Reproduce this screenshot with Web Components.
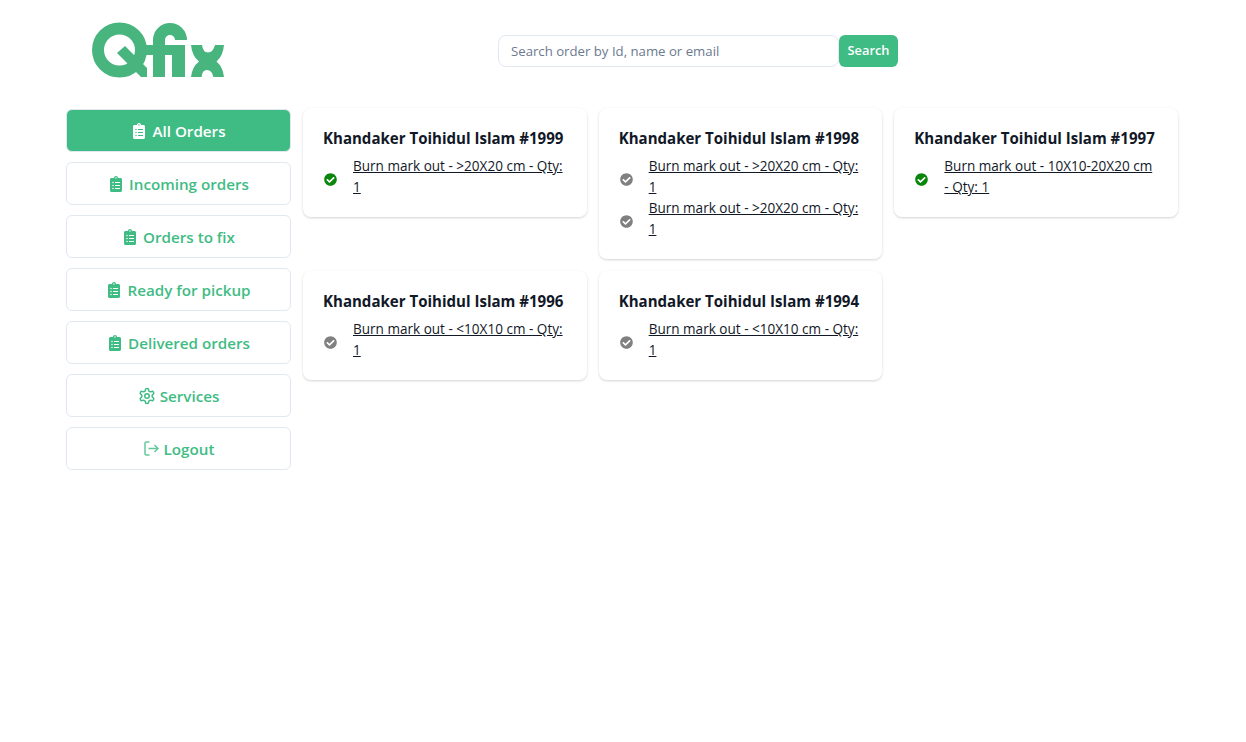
<!DOCTYPE html>
<html><head><meta charset="utf-8">
<style>
html,body{margin:0;padding:0;background:#fff;font-family:"Open Sans","Noto Sans","Liberation Sans",sans-serif;color:#111827}
</style></head><body>
<template id="clip"><svg width="12" height="16" viewBox="0 0 384 512" fill="currentColor" style="display:block"><path d="M336 64h-80c0-35.300-28.700-64-64-64s-64 28.700-64 64H48C21.500 64 0 85.500 0 112v352c0 26.500 21.500 48 48 48h288c26.500 0 48-21.500 48-48V112c0-26.500-21.500-48-48-48zM96 424c-13.300 0-24-10.700-24-24s10.700-24 24-24 24 10.700 24 24-10.700 24-24 24zm0-96c-13.300 0-24-10.700-24-24s10.700-24 24-24 24 10.700 24 24-10.700 24-24 24zm0-96c-13.300 0-24-10.700-24-24s10.700-24 24-24 24 10.700 24 24-10.700 24-24 24zm96-192c13.300 0 24 10.700 24 24s-10.700 24-24 24-24-10.700-24-24 10.700-24 24-24zm128 368c0 4.400-3.600 8-8 8H168c-4.400 0-8-3.600-8-8v-16c0-4.400 3.600-8 8-8h144c4.400 0 8 3.600 8 8v16zm0-96c0 4.400-3.600 8-8 8H168c-4.400 0-8-3.600-8-8v-16c0-4.400 3.600-8 8-8h144c4.400 0 8 3.600 8 8v16zm0-96c0 4.400-3.600 8-8 8H168c-4.400 0-8-3.600-8-8v-16c0-4.400 3.600-8 8-8h144c4.400 0 8 3.600 8 8v16z"/></svg></template>
<q-app></q-app>
<script>
const GREEN='#3fbc84';
const icons={
clip:()=>document.getElementById('clip').innerHTML,
gear:()=>`<svg width="18" height="18" viewBox="0 0 24 24" fill="none" stroke="currentColor" stroke-width="2" stroke-linecap="round" stroke-linejoin="round" style="display:block;margin-right:-3px;margin-left:-2px"><path d="M12.220 2h-.44a2 2 0 0 0-2 2v.18a2 2 0 0 1-1 1.730l-.43.250a2 2 0 0 1-2 0l-.150-.080a2 2 0 0 0-2.730.730l-.220.380a2 2 0 0 0 .730 2.730l.150.100a2 2 0 0 1 1 1.720v.510a2 2 0 0 1-1 1.740l-.150.090a2 2 0 0 0-.730 2.730l.220.380a2 2 0 0 0 2.730.730l.150-.080a2 2 0 0 1 2 0l.430.250a2 2 0 0 1 1 1.730V20a2 2 0 0 0 2 2h.44a2 2 0 0 0 2-2v-.18a2 2 0 0 1 1-1.730l.430-.250a2 2 0 0 1 2 0l.150.080a2 2 0 0 0 2.730-.730l.220-.390a2 2 0 0 0-.730-2.730l-.150-.080a2 2 0 0 1-1-1.740v-.500a2 2 0 0 1 1-1.740l.150-.090a2 2 0 0 0 .730-2.730l-.220-.380a2 2 0 0 0-2.730-.730l-.150.080a2 2 0 0 1-2 0l-.430-.250a2 2 0 0 1-1-1.730V4a2 2 0 0 0-2-2z"/><circle cx="12" cy="12" r="3"/></svg>`,
out:()=>`<svg width="15" height="15" viewBox="0 0 15 15" fill="none" stroke="currentColor" stroke-width="1.500" style="display:block;opacity:.8;margin-right:-2px;margin-left:-1px"><path d="M5.500 1H2.200Q1 1 1 2.200v10.600Q1 14 2.200 14H5.500"/><path d="M4.500 7.500h9.500M10.500 4 14 7.500 10.500 11"/></svg>`
};
const LOGO='#48b57f';
class QLogo extends HTMLElement{constructor(){super();this.attachShadow({mode:'open'}).innerHTML=`<style>:host{display:block;width:134px;height:56px}svg{display:block}</style>
<svg width="134" height="56" viewBox="0 0 134 56" fill="none" stroke="${LOGO}" aria-label="Qfix logo">
<circle cx="27.500" cy="28" r="21.500" stroke-width="12"/>
<path fill="${LOGO}" stroke="none" d="M33 24 55 46V55H49L25 31Z"/>
<path d="M53 28H80" stroke-width="10"/>
<path d="M67 55V18a11 11 0 0 1 22 0" stroke-width="12"/>
<path fill="${LOGO}" stroke="none" d="M80 23H93V55H80Z"/>
<path fill="${LOGO}" stroke="none" d="M99 23H110Q111 30.500 116 30.500T123 23H132Q131 34 124.500 39.500 131 45 132 55H121.300Q120 48 115 48T109.700 55H99Q100 45 107 39.500 100 34 99 23Z"/>
</svg>`}}
customElements.define('q-logo',QLogo);

class QSearch extends HTMLElement{constructor(){super();this.attachShadow({mode:'open'}).innerHTML=`<style>
:host{display:flex;width:400px;align-items:center;font-family:inherit}
.i{flex:1;height:32px;box-sizing:border-box;border:1px solid #e2e8f0;border-radius:8px;display:flex;align-items:center;padding-left:12px;font-size:13.2px;color:#6b7a90;background:#fff;padding-bottom:1px}
.b{height:32px;width:59px;box-sizing:border-box;background:${GREEN};color:#fff;border-radius:6px;font-weight:600;font-size:12.8px;display:flex;align-items:center;justify-content:center;padding-bottom:2px}
</style><div class="i"><slot></slot></div><div class="b">Search</div>`}}
customElements.define('q-search',QSearch);

class QNav extends HTMLElement{constructor(){super();const a=this.hasAttribute('active');this.attachShadow({mode:'open'}).innerHTML=`<style>
:host{display:flex;height:43px;box-sizing:border-box;border:1px solid #e2e8f0;border-radius:6px;background:${a?GREEN:'#fff'};color:${a?'#fff':GREEN};align-items:center;justify-content:center;gap:7px;padding-left:2px;font-size:15.200px;font-weight:600}
</style>${icons[this.getAttribute('icon')||'clip']()}<span><slot></slot></span>`}}
customElements.define('q-nav',QNav);

class QLine extends HTMLElement{constructor(){super();const on=this.hasAttribute('on');this.attachShadow({mode:'open'}).innerHTML=`<style>
:host{display:flex;align-items:center;gap:16px;font-size:13.550px;line-height:21px}
svg{flex:none;display:block;margin:4px 0 0 1px}
a{color:#111827;text-decoration:underline;flex:1}
</style><svg width="13" height="13" viewBox="0 0 512 512"><path fill="${on?'#0a860a':'#808080'}" d="M504 256c0 136.970-111.030 248-248 248S8 392.970 8 256 119.030 8 256 8s248 111.030 248 248zM227.310 387.310l184-184c6.250-6.250 6.250-16.380 0-22.630l-22.630-22.630c-6.250-6.250-16.380-6.250-22.630 0L216 308.120l-70.060-70.060c-6.250-6.250-16.380-6.250-22.630 0l-22.630 22.630c-6.250 6.250-6.250 16.380 0 22.630l104 104c6.250 6.250 16.380 6.250 22.630 0z"/></svg><a><slot></slot></a>`}}
customElements.define('q-line',QLine);

class QCard extends HTMLElement{constructor(){super();this.attachShadow({mode:'open'}).innerHTML=`<style>
:host{display:block;background:#fff;border-radius:8px;box-shadow:0 1px 3px rgba(0,0,0,.12),0 1px 2px rgba(0,0,0,.06);padding:19px 20px 19px 20px;align-self:start;box-sizing:border-box;min-width:0}
h3{margin:0 0 7px;font-size:15.050px;line-height:22px;font-weight:700;color:#111827;white-space:nowrap}
</style><h3>${this.getAttribute('name')}</h3><slot></slot>`}}
customElements.define('q-card',QCard);

class QApp extends HTMLElement{constructor(){super();
const L='Burn mark out - &gt;20X20 cm - Qty: 1';
this.attachShadow({mode:'open'}).innerHTML=`<style>
:host{display:block;width:1112px;margin-left:66px}
header{display:flex;height:108px;align-items:flex-start}
q-logo{margin:22px 0 0 26px}
q-search{margin:35px 0 0 272px}
.m{display:grid;grid-template-columns:225px minmax(0,1fr);gap:12px}
nav{display:flex;flex-direction:column;gap:10px;padding-top:1px}
.g{display:grid;grid-template-columns:repeat(3,minmax(0,1fr));gap:12px;align-items:start;align-content:start}
</style><header><q-logo></q-logo><q-search>Search order by Id, name or email</q-search></header>
<div class="m"><nav>
<q-nav active>All Orders</q-nav><q-nav>Incoming orders</q-nav><q-nav>Orders to fix</q-nav><q-nav>Ready for pickup</q-nav><q-nav>Delivered orders</q-nav><q-nav icon="gear">Services</q-nav><q-nav icon="out">Logout</q-nav>
</nav><div class="g">
<q-card name="Khandaker Toihidul Islam #1999"><q-line on>${L}</q-line></q-card>
<q-card name="Khandaker Toihidul Islam #1998"><q-line>${L}</q-line><q-line>${L}</q-line></q-card>
<q-card name="Khandaker Toihidul Islam #1997"><q-line on>Burn mark out - 10X10-20X20 cm - Qty: 1</q-line></q-card>
<q-card name="Khandaker Toihidul Islam #1996"><q-line>Burn mark out - &lt;10X10 cm - Qty: 1</q-line></q-card>
<q-card name="Khandaker Toihidul Islam #1994"><q-line>Burn mark out - &lt;10X10 cm - Qty: 1</q-line></q-card>
</div></div>`}}
customElements.define('q-app',QApp);
</script></body></html>
